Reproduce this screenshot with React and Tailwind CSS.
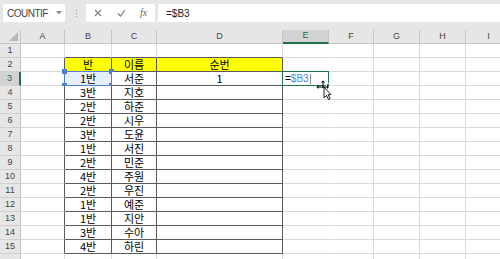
import React from 'react';

const BAN  = ['1반','3반','2반','2반','3반','1반','2반','4반','2반','1반','1반','3반','4반'];
const NAME = ['서준','지호','하준','시우','도윤','서진','민준','주원','우진','예준','지안','수아','하린'];
const LETTERS = ['A','B','C','D','E','F','G','H','I'];
const ROWS = Array.from({ length: 16 }, (_, i) => i + 1);

const KR = { fontFamily: '"Noto Sans CJK KR", "Noto Sans", sans-serif' };
const UI = { fontFamily: '"Liberation Sans", Arial, sans-serif' };

function cellText(r, c) {
  if (r === 2) return ['', '', '반', '이름', '순번'][c] || '';
  if (r >= 3 && r <= 15) {
    if (c === 2) return BAN[r - 3];
    if (c === 3) return NAME[r - 3];
    if (c === 4 && r === 3) return '1';
  }
  return '';
}

function Cell({ r, c }) {
  const darkR = c >= 1 && c <= 4 && r >= 2 && r <= 15;
  const darkB = c >= 2 && c <= 4 && r >= 1 && r <= 15;
  const right = darkR ? 'border-r-[#5a5a5a]' : c === 5 ? 'border-r-white' : 'border-r-[#dadada]';
  const bottom = darkB ? 'border-b-[#5a5a5a]' : 'border-b-[#dadada]';
  const yellow = r === 2 && c >= 2 && c <= 4;
  const selB = r === 3 && c === 2;
  const editE = r === 3 && c === 5;
  const bg = yellow ? 'bg-[#ffff00]' : selB ? 'bg-[#e6eefa]' : 'bg-white';
  const text = cellText(r, c);

  return (
    <div className={`relative h-[14px] border-r border-b ${right} ${bottom} ${bg} flex items-center justify-center text-[11px] text-black`} style={KR}>
      {text && <span className="leading-[11px]">{text}</span>}
      {selB && (
        <div className="absolute -left-px -top-px -right-px -bottom-px border border-[#4f7fcf]">
          <span className="absolute -left-[3px] -top-[3px] w-[5px] h-[5px] bg-[#4f7fcf]" />
          <span className="absolute -right-[3px] -top-[3px] w-[5px] h-[5px] bg-[#4f7fcf]" />
          <span className="absolute -left-[3px] -bottom-[3px] w-[5px] h-[5px] bg-[#4f7fcf]" />
          <span className="absolute -right-[3px] -bottom-[3px] w-[5px] h-[5px] bg-[#4f7fcf]" />
        </div>
      )}
      {editE && (
        <div className="absolute -left-px -top-px -right-px -bottom-px border border-[#217346] flex items-center pl-[2px] text-[10px] leading-[10px]" style={UI}>
          <span className="text-black">=</span>
          <span className="text-[#4a86e8]">$B3</span>
          <span className="ml-[1px] w-px h-[10px] bg-[#888]" />
          <span className="absolute -right-[3px] -bottom-[3px] w-[5px] h-[5px] bg-[#217346] border border-white" />
        </div>
      )}
    </div>
  );
}

function Cursor() {
  return (
    <svg className="absolute left-[316px] top-[80px]" width="20" height="20" viewBox="0 0 20 20">
      <path d="M2 7h10M7 2v6" stroke="#000" strokeWidth="1" fill="none" />
      <path d="M0.5 7l2-2v4z M13 7l-2-2v4z M7 0.5l-2 2h4z" fill="#000" />
      <path d="M8 7v11l2.5-2.5 2 4 1.6-.8-2-4H15z" fill="#fff" stroke="#000" strokeWidth="0.9" strokeLinejoin="round" />
    </svg>
  );
}

export default function App() {
  return (
    <div className="relative w-[500px] h-[259px] overflow-hidden bg-white select-none">
      {/* formula bar */}
      <div className="h-[30px] bg-[#e6e6e6] flex items-start pt-[4px]">
        <div className="ml-[3px] w-[62px] h-[18px] bg-white flex items-center pl-[4px] pr-[3px]" style={UI}>
          <span className="flex-1 text-[10px] tracking-[-0.5px] text-[#444]">COUNTIF</span>
          <svg width="6" height="4" viewBox="0 0 6 4"><path d="M0 0h6L3 3.5z" fill="#8a8a8a" /></svg>
        </div>
        <div className="ml-[10px] w-[3px] h-[18px] flex flex-col items-center justify-center gap-[2px]">
          <span className="w-px h-px bg-[#999]" />
          <span className="w-px h-px bg-[#999]" />
          <span className="w-px h-px bg-[#999]" />
        </div>
        <div className="ml-[8px] w-[69px] h-[18px] bg-white flex items-center">
          <svg className="ml-[8px]" width="8" height="8" viewBox="0 0 8 8"><path d="M1 1l6 6M7 1L1 7" stroke="#7a7a7a" strokeWidth="1.1" /></svg>
          <svg className="ml-[15px]" width="9" height="8" viewBox="0 0 9 8"><path d="M1 4.5l2.5 2.5L8 1" stroke="#7a7a7a" strokeWidth="1.2" fill="none" /></svg>
          <span className="ml-[14px] text-[10px] italic text-[#666] leading-none" style={{ fontFamily: '"Liberation Serif", serif' }}>fx</span>
        </div>
        <div className="ml-[3px] flex-1 h-[18px] bg-white flex items-center pl-[8px] text-[10px] text-[#222]" style={UI}>
          =$B3
        </div>
      </div>

      {/* sheet */}
      <div className="grid grid-cols-[21px_44px_47px_45px_126px_46px_45px_46px_46px_46px] w-[512px]" style={UI}>
        <div className="relative h-[14px] bg-[#e6e6e6] border-r border-b border-[#c6c6c6]">
          <svg className="absolute right-[2px] bottom-[2px]" width="9" height="9" viewBox="0 0 9 9"><path d="M9 0v9H0z" fill="#b9b9b9" /></svg>
        </div>
        {LETTERS.map(l => (
          <div key={l}
            className={`h-[14px] flex items-center justify-center text-[9px] border-r ${
              l === 'E'
                ? 'bg-[#d2d2d2] text-[#217346] border-b-2 border-b-[#217346] border-r-[#c6c6c6]'
                : 'bg-[#e6e6e6] text-[#444] border-b border-[#c6c6c6]'
            }`}>
            {l}
          </div>
        ))}
        {ROWS.map(r => (
          <React.Fragment key={r}>
            <div className={`h-[14px] flex items-center justify-center text-[9px] border-b ${
              r === 3
                ? 'bg-[#d2d2d2] text-[#217346] border-r-2 border-r-[#217346] border-b-[#d0d0d0]'
                : 'bg-[#e6e6e6] text-[#444] border-r border-r-[#c6c6c6] border-b-[#d0d0d0]'
            }`}>
              {r < 16 ? r : ''}
            </div>
            {LETTERS.map((l, i) => <Cell key={l} r={r} c={i + 1} />)}
          </React.Fragment>
        ))}
      </div>

      <Cursor />
    </div>
  );
}
